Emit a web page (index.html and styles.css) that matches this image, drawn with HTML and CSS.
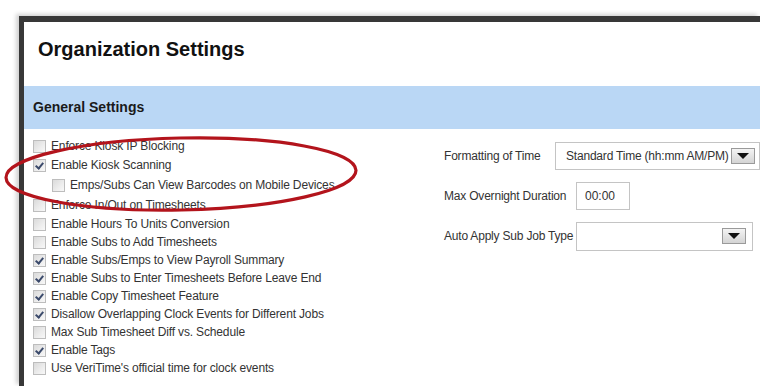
FILE: index.html
```html
<!DOCTYPE html>
<html lang="en">
<head>
    <meta charset="UTF-8">
    <meta name="viewport" content="width=device-width, initial-scale=1.0">
    <title>Organization Settings</title>
    <link rel="stylesheet" href="styles.css">
</head>
<body>
    <div class="window">
        <div class="header">
            <h1>Organization Settings</h1>
        </div>

        <div class="section-bar">General Settings</div>

        <div class="settings">
            <div class="options">
                <label class="option"><input type="checkbox"> Enforce Kiosk IP Blocking</label>
                <label class="option gap-1"><input type="checkbox" checked> Enable Kiosk Scanning</label>
                <label class="option nested gap-2"><input type="checkbox"> Emps/Subs Can View Barcodes on Mobile Devices</label>
                <label class="option gap-2"><input type="checkbox"> Enforce In/Out on Timesheets</label>
                <label class="option gap-1"><input type="checkbox"> Enable Hours To Units Conversion</label>
                <label class="option"><input type="checkbox"> Enable Subs to Add Timesheets</label>
                <label class="option"><input type="checkbox" checked> Enable Subs/Emps to View Payroll Summary</label>
                <label class="option"><input type="checkbox" checked> Enable Subs to Enter Timesheets Before Leave End</label>
                <label class="option"><input type="checkbox" checked> Enable Copy Timesheet Feature</label>
                <label class="option"><input type="checkbox" checked> Disallow Overlapping Clock Events for Different Jobs</label>
                <label class="option"><input type="checkbox"> Max Sub Timesheet Diff vs. Schedule</label>
                <label class="option"><input type="checkbox" checked> Enable Tags</label>
                <label class="option"><input type="checkbox"> Use VeriTime's official time for clock events</label>
            </div>

            <div class="fields">
                <div class="field">
                    <span class="field-label short">Formatting of Time</span>
                    <div class="select wide">
                        <span class="select-text">Standard Time (hh:mm AM/PM)</span>
                        <span class="select-btn"><span class="arrow"></span></span>
                    </div>
                </div>
                <div class="field">
                    <span class="field-label">Max Overnight Duration</span>
                    <div class="text-input">00:00</div>
                </div>
                <div class="field">
                    <span class="field-label">Auto Apply Sub Job Type</span>
                    <div class="select">
                        <span class="select-text"></span>
                        <span class="select-btn"><span class="arrow"></span></span>
                    </div>
                </div>
            </div>
        </div>
    </div>

    <!-- red annotation circled around the kiosk options -->
    <svg class="annotation" width="760" height="386" viewBox="0 0 760 386">
        <ellipse cx="181" cy="174" rx="175" ry="36" transform="rotate(-1.2 181 174)"
                 fill="none" stroke="#b3141c" stroke-width="3.2"/>
    </svg>
</body>
</html>
```

FILE: styles.css
```css
* {
    margin: 0;
    padding: 0;
    box-sizing: border-box;
}

body {
    font-family: "Liberation Sans", Arial, sans-serif;
    background: #fff;
    color: #333;
    width: 760px;
    height: 386px;
    overflow: hidden;
    position: relative;
}

.window {
    margin: 16px 0 0 19px;
    width: 741px;
    height: 370px;
    overflow: hidden;
    border-top: 6px solid #383838;
    border-left: 5px solid #383838;
    background: #fff;
    box-shadow: -3px -2px 4px rgba(0, 0, 0, 0.18);
}

.header {
    height: 64px;
    padding: 16px 0 0 14px;
}

.header h1 {
    font-size: 20px;
    font-weight: bold;
    color: #111;
    line-height: 23px;
}

.section-bar {
    height: 43px;
    line-height: 43px;
    padding-left: 9px;
    background: #bad7f5;
    font-size: 14px;
    font-weight: bold;
    color: #1a1a1a;
}

.settings {
    display: flex;
}

.options {
    width: 421px;
    padding: 8px 0 0 9px;
    display: flex;
    flex-direction: column;
}

.option {
    height: 18px;
    display: flex;
    align-items: center;
    gap: 5px;
    font-size: 12px;
    letter-spacing: -0.15px;
    color: #333;
    white-space: nowrap;
}

.option.nested {
    padding-left: 19px;
}

.gap-1 { margin-top: 1px; }
.gap-2 { margin-top: 2px; }

.option input {
    appearance: none;
    -webkit-appearance: none;
    width: 13px;
    height: 13px;
    flex: none;
    border: 1px solid #bdbdbd;
    background: linear-gradient(135deg, #dadada 0%, #ededed 60%, #f8f8f8 100%);
    position: relative;
}

.option input:checked::after {
    content: "";
    position: absolute;
    left: 3px;
    top: 1px;
    width: 3px;
    height: 6px;
    border-right: 2px solid #3b4a6b;
    border-bottom: 2px solid #3b4a6b;
    transform: rotate(40deg);
}

.fields {
    flex: 1;
    padding-top: 13px;
    display: flex;
    flex-direction: column;
    gap: 12px;
}

.field {
    height: 28px;
    display: flex;
    align-items: center;
}

.field-label {
    width: 132px;
    flex: none;
    font-size: 12px;
    letter-spacing: -0.2px;
    color: #333;
    white-space: nowrap;
}

.field-label.short {
    width: 111px;
}

.select {
    width: 177px;
    height: 29px;
    flex: none;
    border: 1px solid #c4c4c4;
    display: flex;
    align-items: center;
    justify-content: space-between;
    padding: 0 6px 0 10px;
    background: #fff;
}

.select.wide {
    width: 205px;
    height: 28px;
    padding-right: 4px;
}

.select-text {
    font-size: 12px;
    letter-spacing: -0.2px;
    color: #333;
    white-space: nowrap;
}

.select-btn {
    width: 24px;
    height: 16px;
    border: 1px solid #9a9a9a;
    background: linear-gradient(#f4f4f4, #d4d4d4);
    display: flex;
    align-items: center;
    justify-content: center;
}

.arrow {
    width: 0;
    height: 0;
    border-left: 6px solid transparent;
    border-right: 6px solid transparent;
    border-top: 6px solid #111;
}

.text-input {
    width: 54px;
    height: 28px;
    flex: none;
    border: 1px solid #c4c4c4;
    padding-left: 8px;
    font-size: 12px;
    line-height: 26px;
    color: #333;
}

.annotation {
    position: absolute;
    left: 0;
    top: 0;
    pointer-events: none;
}
```
